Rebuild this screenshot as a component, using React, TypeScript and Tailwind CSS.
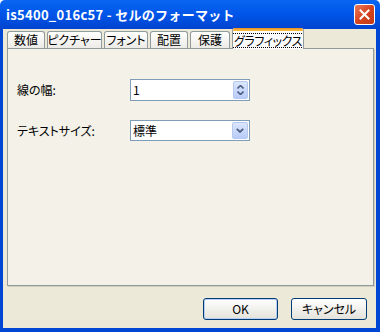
import React from "react";

const Tab = ({ label, w, selected }: { label: string; w: number; selected?: boolean }) => {
  if (selected) {
    return (
      <div
        className="relative z-10 -mb-px h-[21px] flex flex-col border-x border-[#919B9C] bg-[#FCFCFE] rounded-t-[3px] overflow-hidden"
        style={{ width: w }}
      >
        <div className="h-[3px] bg-gradient-to-b from-[#E68B2C] to-[#FFC73C] shrink-0" />
        <div className="flex-1 flex items-center justify-center">
          <span className="border border-dotted border-black px-[1px] leading-[13px] text-[12px] tracking-[-0.4px] text-black whitespace-nowrap">{label}</span>
        </div>
      </div>
    );
  }
  return (
    <div
      className="h-[17px] flex items-center justify-center border-t border-x border-[#919B9C] rounded-t-[3px] bg-gradient-to-b from-[#FFFFFF] to-[#ECEBE6] text-[12px] text-black leading-none whitespace-nowrap"
      style={{ width: w }}
    >
      {label}
    </div>
  );
};

export default function App() {
  return (
    <div className="w-[380px] h-[332px] flex flex-col font-['Noto_Sans_CJK_JP',sans-serif] [font-feature-settings:'palt'] select-none overflow-hidden">
      {/* Title bar */}
      <div className="h-[29px] shrink-0 flex items-center justify-between pl-[6px] pr-[5px] bg-gradient-to-b from-[#0A66F2] via-[#0055E8] to-[#0043CE] rounded-t-[5px]">
        <span className="text-white font-bold text-[13px] leading-none tracking-[0.3px] [font-feature-settings:normal]">is5400_016c57 - セルのフォーマット</span>
        <div className="w-[21px] h-[21px] rounded-[3px] border border-white bg-gradient-to-br from-[#E97B5D] via-[#D6441F] to-[#C23A18] flex items-center justify-center">
          <svg width="11" height="11" viewBox="0 0 11 11">
            <path d="M1.5 1.5 L9.5 9.5 M9.5 1.5 L1.5 9.5" stroke="white" strokeWidth="2" strokeLinecap="square" />
          </svg>
        </div>
      </div>
      {/* Frame */}
      <div className="flex-1 flex flex-col bg-[#ECE9D8] border-l-[3px] border-r-[4px] border-b-[4px] border-[#0046D5]">
        {/* Tabs */}
        <div className="h-[19px] shrink-0 flex items-end pl-[4px] gap-[2px]">
          <Tab label="数値" w={38} />
          <Tab label="ピクチャー" w={55} />
          <Tab label="フォント" w={44} />
          <Tab label="配置" w={38} />
          <Tab label="保護" w={40} />
          <Tab label="グラフィックス" w={72} selected />
        </div>
        {/* Panel */}
        <div className="ml-[4px] w-[367px] h-[238px] shrink-0 border border-[#919B9C] bg-[#F3F1E8] shadow-[1px_1px_0_#D0CEBF] pl-[9px] pt-[30px] flex flex-col">
          <div className="flex items-center h-[22px]">
            <span className="w-[113px] text-[12px] text-black">線の幅:</span>
            <div className="w-[120px] h-[22px] border border-[#7F9DB9] bg-white flex items-center">
              <span className="flex-1 pl-[2px] text-[12px] text-black leading-none">1</span>
              <div className="w-[15px] h-[18px] mr-[1px] rounded-[2px] border border-[#B5C8F0] bg-gradient-to-b from-[#DCE6FD] to-[#B9CCF8] flex flex-col items-center justify-center gap-[2px]">
                <svg width="7" height="4" viewBox="0 0 7 4"><path d="M0.5 3.5 L3.5 0.5 L6.5 3.5" stroke="#4D6185" strokeWidth="1.6" fill="none" /></svg>
                <svg width="7" height="4" viewBox="0 0 7 4"><path d="M0.5 0.5 L3.5 3.5 L6.5 0.5" stroke="#4D6185" strokeWidth="1.6" fill="none" /></svg>
              </div>
            </div>
          </div>
          <div className="flex items-center h-[21px] mt-[19px]">
            <span className="w-[113px] text-[12px] text-black">テキストサイズ:</span>
            <div className="w-[120px] h-[21px] border border-[#7F9DB9] bg-white flex items-center">
              <span className="flex-1 pl-[2px] text-[12px] text-black leading-none">標準</span>
              <div className="w-[16px] h-[17px] mr-[1px] rounded-[2px] border border-[#B5C8F0] bg-gradient-to-b from-[#DCE6FD] to-[#B9CCF8] flex items-center justify-center">
                <svg width="8" height="5" viewBox="0 0 8 5"><path d="M0.8 0.8 L4 4 L7.2 0.8" stroke="#4D6185" strokeWidth="1.8" fill="none" /></svg>
              </div>
            </div>
          </div>
        </div>
        {/* Buttons */}
        <div className="mt-[12px] flex justify-end pr-[9px] gap-[13px]">
          <button className="w-[75px] h-[22px] rounded-[3px] border border-[#003C74] bg-gradient-to-b from-[#FFFFFF] to-[#E3E2DA] shadow-[inset_0_0_0_1px_#B6CDF5] text-[12px] text-black leading-none">OK</button>
          <button className="w-[76px] h-[22px] rounded-[3px] border border-[#003C74] bg-gradient-to-b from-[#FFFFFF] to-[#E3E2DA] text-[12px] text-black leading-none">キャンセル</button>
        </div>
      </div>
    </div>
  );
}
